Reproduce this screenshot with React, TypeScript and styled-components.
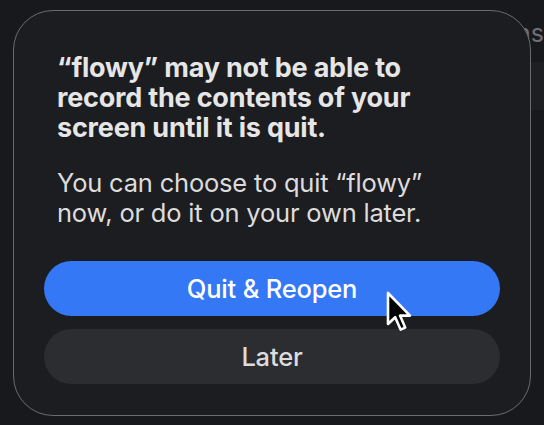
import React from 'react';
import styled, { createGlobalStyle } from 'styled-components';

const GlobalStyle = createGlobalStyle`
  html, body {
    margin: 0;
    padding: 0;
    background: #18191d;
    font-family: Inter, "Noto Sans", "Liberation Sans", sans-serif;
    -webkit-font-smoothing: antialiased;
  }
`;

const Page = styled.div`
  position: relative;
  width: 544px;
  height: 425px;
  overflow: hidden;
  padding: 10px 13px 9px;
  box-sizing: border-box;
  background: #18191d;
`;

// window content peeking out behind the alert
const Behind = styled.div`
  position: absolute;
  left: 500px;
  top: 0;
  width: 44px;
  height: 425px;
`;

const BehindLabel = styled.div`
  position: absolute;
  left: 16px;
  top: 18px;
  font-size: 25px;
  color: #6e6f73;
`;

const BehindBand = styled.div`
  position: absolute;
  left: 0;
  top: 62px;
  width: 44px;
  height: 48px;
  background: #1e1f23;
`;

const Dialog = styled.div`
  position: relative;
  height: 100%;
  box-sizing: border-box;
  border-radius: 40px;
  background: #1c1d20;
  border: 1.5px solid #6a6b70;
  padding: 42px 30px 30px;
  display: flex;
  flex-direction: column;
`;

const Title = styled.div`
  padding: 0 13px;
  max-width: 385px;
  font-size: 27px;
  font-weight: 700;
  line-height: 30px;
  color: #e6e6e7;
  letter-spacing: -0.2px;
`;

const Body = styled.div`
  padding: 0 13px;
  max-width: 385px;
  margin-top: 25px;
  font-size: 25.5px;
  font-weight: 400;
  line-height: 30px;
  color: #dcdcdd;
  letter-spacing: -0.2px;
`;

const Buttons = styled.div`
  margin-top: 33px;
  display: flex;
  flex-direction: column;
  gap: 13px;
`;

const Button = styled.div<{ $primary?: boolean }>`
  height: 55px;
  border-radius: 28px;
  display: flex;
  align-items: center;
  justify-content: center;
  font-size: 25.5px;
  font-weight: 500;
  letter-spacing: -0.2px;
  color: ${(p) => (p.$primary ? '#ffffff' : '#dcdcdd')};
  background: ${(p) => (p.$primary ? '#3478f6' : '#2c2d31')};
`;

const Cursor = styled.svg`
  position: absolute;
  left: 384px;
  top: 290px;
`;

export default function App() {
  return (
    <Page>
      <GlobalStyle />
      <Behind>
        <BehindLabel>ns</BehindLabel>
        <BehindBand />
      </Behind>
      <Dialog>
        <Title>“flowy” may not be able to record the contents of your screen until it is quit.</Title>
        <Body>You can choose to quit “flowy” now, or do it on your own later.</Body>
        <Buttons>
          <Button $primary>Quit &amp; Reopen</Button>
          <Button>Later</Button>
        </Buttons>
      </Dialog>
      <Cursor width="32" height="46" viewBox="0 0 16 23">
        <path
          d="M2 1.5 L2 17 L5.6 13.6 L8.3 19.8 L10.6 18.8 L8 12.8 L13 12.8 Z"
          fill="#000"
          stroke="#fff"
          strokeWidth="1.3"
          strokeLinejoin="round"
        />
      </Cursor>
    </Page>
  );
}
